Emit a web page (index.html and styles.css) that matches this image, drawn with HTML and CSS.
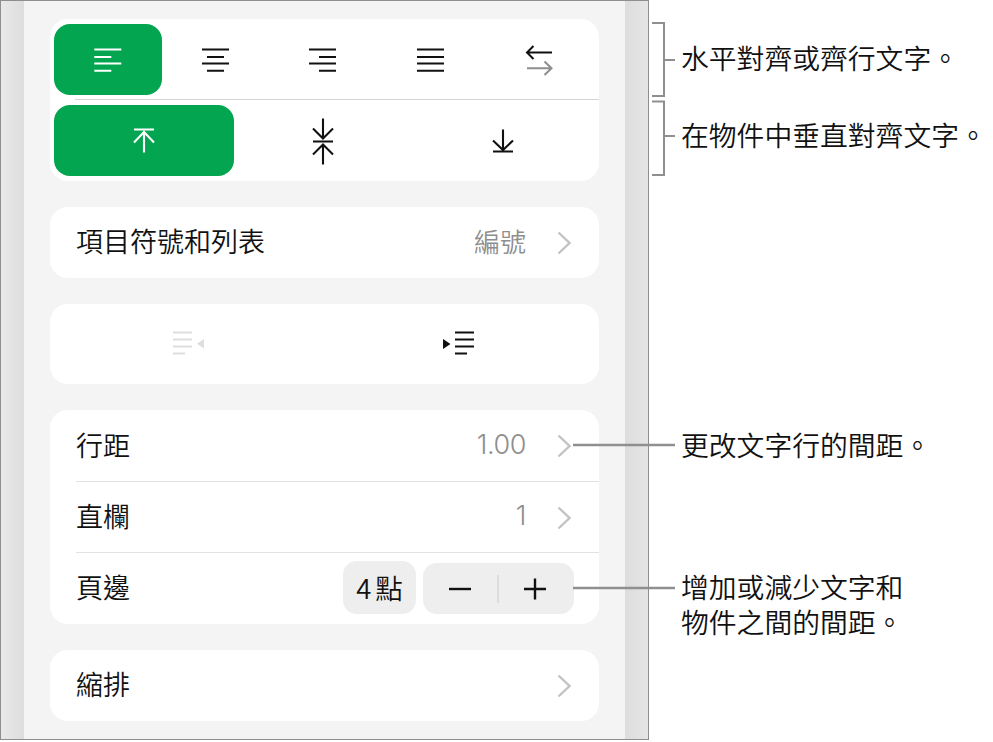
FILE: index.html
```html
<!DOCTYPE html>
<html lang="zh-Hant">
<head>
<meta charset="utf-8">
<title>文字格式</title>
<link rel="stylesheet" href="styles.css">
</head>
<body>
<div class="stage">
  <div class="panel">
    <div class="gutter gutter-left"></div>
    <main class="sheet">
      <section class="card card-align">
        <div class="seg seg-five">
          <button class="seg-btn is-on"><svg class="ico" viewBox="0 0 32 32"><path d="M2.3 5.500h27M2.300 13h17M2.300 19.600h27M2.300 26.800h17"/></svg></button>
          <button class="seg-btn"><svg class="ico" viewBox="0 0 32 32"><path d="M2 5.500h27M7 13h17M2 19.600h27M7 26.800h17"/></svg></button>
          <button class="seg-btn"><svg class="ico" viewBox="0 0 32 32"><path d="M1 5.500h27M11 13h17M1 19.600h27M11 26.800h17"/></svg></button>
          <button class="seg-btn"><svg class="ico" viewBox="0 0 32 32"><path d="M1 5.500h27M1 13h27M1 19.600h27M1 26.800h27"/></svg></button>
          <button class="seg-btn"><svg class="ico" viewBox="0 0 32 32"><path d="M3.500 8.500H28M9.500 2L3 8.500L9.500 15"/><path class="muted" d="M3 24.200H27M20.500 17.500L27.500 24.200L20.500 31"/></svg></button>
        </div>
        <div class="seg-sep"></div>
        <div class="seg seg-three">
          <button class="seg-btn is-on"><svg class="ico-tall" viewBox="0 0 40 48"><path d="M10 12.500h20M20 14v21.500M10 25.500L20 15L30 25.500"/></svg></button>
          <button class="seg-btn"><svg class="ico-tall" viewBox="0 0 40 48"><path d="M19 1.500v19.500M9 11.500L19 21.500L29 11.500M9 24.500h20M19 28v19.500M9 37.500L19 27.500L29 37.500"/></svg></button>
          <button class="seg-btn"><svg class="ico-tall" viewBox="0 0 40 48"><path d="M19 12.500v20M9 23.500L19 33L29 23.500M9 34.500h20"/></svg></button>
        </div>
      </section>

      <section class="card">
        <div class="row">
          <span class="label">項目符號和列表</span>
          <span class="value">編號</span>
          <svg class="chev" viewBox="0 0 14 24"><path d="M1.500 1.500L12.500 12L1.500 22.500"/></svg>
        </div>
      </section>

      <section class="card card-indent">
        <button class="indent-btn"><svg class="ico-indent faded" viewBox="0 0 32 26"><path d="M0 1.500h19M0 8.500h19M0 15.500h19M0 22.500h12"/><polygon points="31,8 31,17.500 24,12.700"/></svg></button>
        <button class="indent-btn"><svg class="ico-indent" viewBox="0 0 32 26"><path d="M12 1.500h19M12 8.500h19M12 15.500h19M12 22.500h12"/><polygon points="0,8 0,18 7.500,13"/></svg></button>
      </section>

      <section class="card">
        <div class="row row-line row-tall">
          <span class="label">行距</span>
          <span class="value value-num">1.00</span>
          <svg class="chev" viewBox="0 0 14 24"><path d="M1.500 1.500L12.500 12L1.500 22.500"/></svg>
        </div>
        <div class="row row-line">
          <span class="label">直欄</span>
          <span class="value value-num">1</span>
          <svg class="chev" viewBox="0 0 14 24"><path d="M1.500 1.500L12.500 12L1.500 22.500"/></svg>
        </div>
        <div class="row row-stepper">
          <span class="label">頁邊</span>
          <span class="pill">4 點</span>
          <div class="stepper">
            <button class="step"><svg class="step-ico" viewBox="0 0 24 24"><path d="M1 12h22"/></svg></button>
            <span class="step-div"></span>
            <button class="step"><svg class="step-ico" viewBox="0 0 24 24"><path d="M1 12h22M12 1.500v21"/></svg></button>
          </div>
        </div>
      </section>

      <section class="card">
        <div class="row">
          <span class="label">縮排</span>
          <svg class="chev" viewBox="0 0 14 24"><path d="M1.500 1.500L12.500 12L1.500 22.500"/></svg>
        </div>
      </section>
    </main>
    <div class="gutter gutter-right"></div>
  </div>

  <svg class="leaders" viewBox="0 0 993 742">
    <path d="M652 23H664V96H652M664 60H675"/>
    <path d="M652 101.500H664V175H652M664 136H675"/>
    <path class="leader-thick" d="M573 445H675"/>
    <path class="leader-thick" d="M573 588H675"/>
  </svg>
  <p class="note note-a">水平對齊或齊行文字。</p>
  <p class="note note-b">在物件中垂直對齊文字。</p>
  <p class="note note-c">更改文字行的間距。</p>
  <p class="note note-d">增加或減少文字和<br>物件之間的間距。</p>
</div>
</body>
</html>
```

FILE: styles.css
```css
* { box-sizing: border-box; }
html, body { margin: 0; padding: 0; background: #fff; }
body {
  font-family: "Noto Sans CJK TC", "Noto Sans", sans-serif;
  font-weight: 350;
  color: #111;
}
.stage { position: relative; width: 993px; height: 742px; overflow: hidden; }
.panel {
  display: flex;
  width: 649px;
  height: 740px;
  border: 1px solid #8e8e8e;
}
.gutter { width: 23px; flex: none; }
.gutter-left { background: linear-gradient(to right, #e8e9e8, #dcdddc); }
.gutter-right { background: linear-gradient(to right, #dcdddc, #e4e5e4); }
.sheet {
  flex: 1;
  background: #f3f4f3;
  padding: 18px 26px 0;
  display: flex;
  flex-direction: column;
  gap: 26px;
}
.card { background: #fff; border-radius: 18px; }
.card-align { padding: 5px 4px; height: 162px; }
.seg { display: grid; height: 71px; }
.seg-five { grid-template-columns: repeat(5, 108px); }
.seg-three { grid-template-columns: repeat(3, 180px); }
button {
  border: 0;
  background: none;
  padding: 0;
  font: inherit;
  color: inherit;
  display: flex;
  align-items: center;
  justify-content: center;
}
.seg-btn { border-radius: 16px; color: #111; }
.seg-btn.is-on { background: #04a550; color: #fff; }
.seg-sep { height: 1px; background: #d4d4d4; margin: 4px -4px 5px 21px; }
.ico, .ico-tall, .ico-indent, .chev, .step-ico, .leaders { fill: none; }
.ico { width: 32px; height: 32px; stroke: currentColor; stroke-width: 2; }
.ico .muted { stroke: #8e8e8e; }
.ico-tall { width: 40px; height: 48px; stroke: currentColor; stroke-width: 2.100; }
.row {
  display: flex;
  align-items: center;
  height: 71px;
  padding: 0 28px 0 26px;
}
.row-tall { height: 72px; }
.row-line { position: relative; }
.row-line::after {
  content: "";
  position: absolute;
  left: 26px;
  right: 0;
  bottom: 0;
  height: 1px;
  background: #e2e2e2;
}
.label { font-size: 27px; line-height: 36px; margin-right: auto; padding-bottom: 3px; }
.value { font-size: 26px; line-height: 36px; color: #8e8e8e; margin-right: 31px; padding-bottom: 3px; }
.value-num {
  font-family: Inter, "Noto Sans", sans-serif;
  font-weight: 300;
  font-size: 27px;
  letter-spacing: -0.4px;
}
.chev { width: 14px; height: 24px; stroke: #c2c2c2; stroke-width: 2.300; }
.card-indent { display: flex; height: 80px; padding: 0 5px 0 4px; }
.indent-btn { flex: 1; }
.ico-indent { width: 32px; height: 26px; stroke: #111; stroke-width: 2; }
.ico-indent polygon { fill: #111; stroke: none; }
.ico-indent.faded { stroke: #dedede; }
.ico-indent.faded polygon { fill: #dedede; }
.row-stepper { padding-right: 25px; gap: 7px; }
.pill {
  width: 73px;
  height: 53px;
  margin-bottom: 2px;
  border-radius: 14px;
  background: #eeeeee;
  font-size: 27.500px;
  word-spacing: -2px;
  line-height: 53px;
  text-align: center;
  white-space: nowrap;
}
.stepper {
  display: flex;
  align-items: center;
  width: 151px;
  height: 51px;
  padding-right: 2px;
  border-radius: 14px;
  background: #eeeeee;
}
.step { flex: 1; height: 100%; }
.step-div { width: 2px; height: 28px; background: #dcdcdc; flex: none; }
.step-ico { width: 24px; height: 24px; stroke: #111; stroke-width: 2.400; }
.leaders {
  position: absolute;
  left: 0;
  top: 0;
  width: 993px;
  height: 742px;
  stroke: #8f8f8f;
  stroke-width: 2;
  pointer-events: none;
}
.leader-thick { stroke-width: 2.500; }
.note {
  position: absolute;
  left: 681px;
  margin: 0;
  font-size: 27.800px;
  line-height: 35px;
  white-space: nowrap;
  color: #111;
}
.note-a { top: 40px; }
.note-b { top: 117px; }
.note-c { top: 427px; }
.note-d { top: 569px; }
```
